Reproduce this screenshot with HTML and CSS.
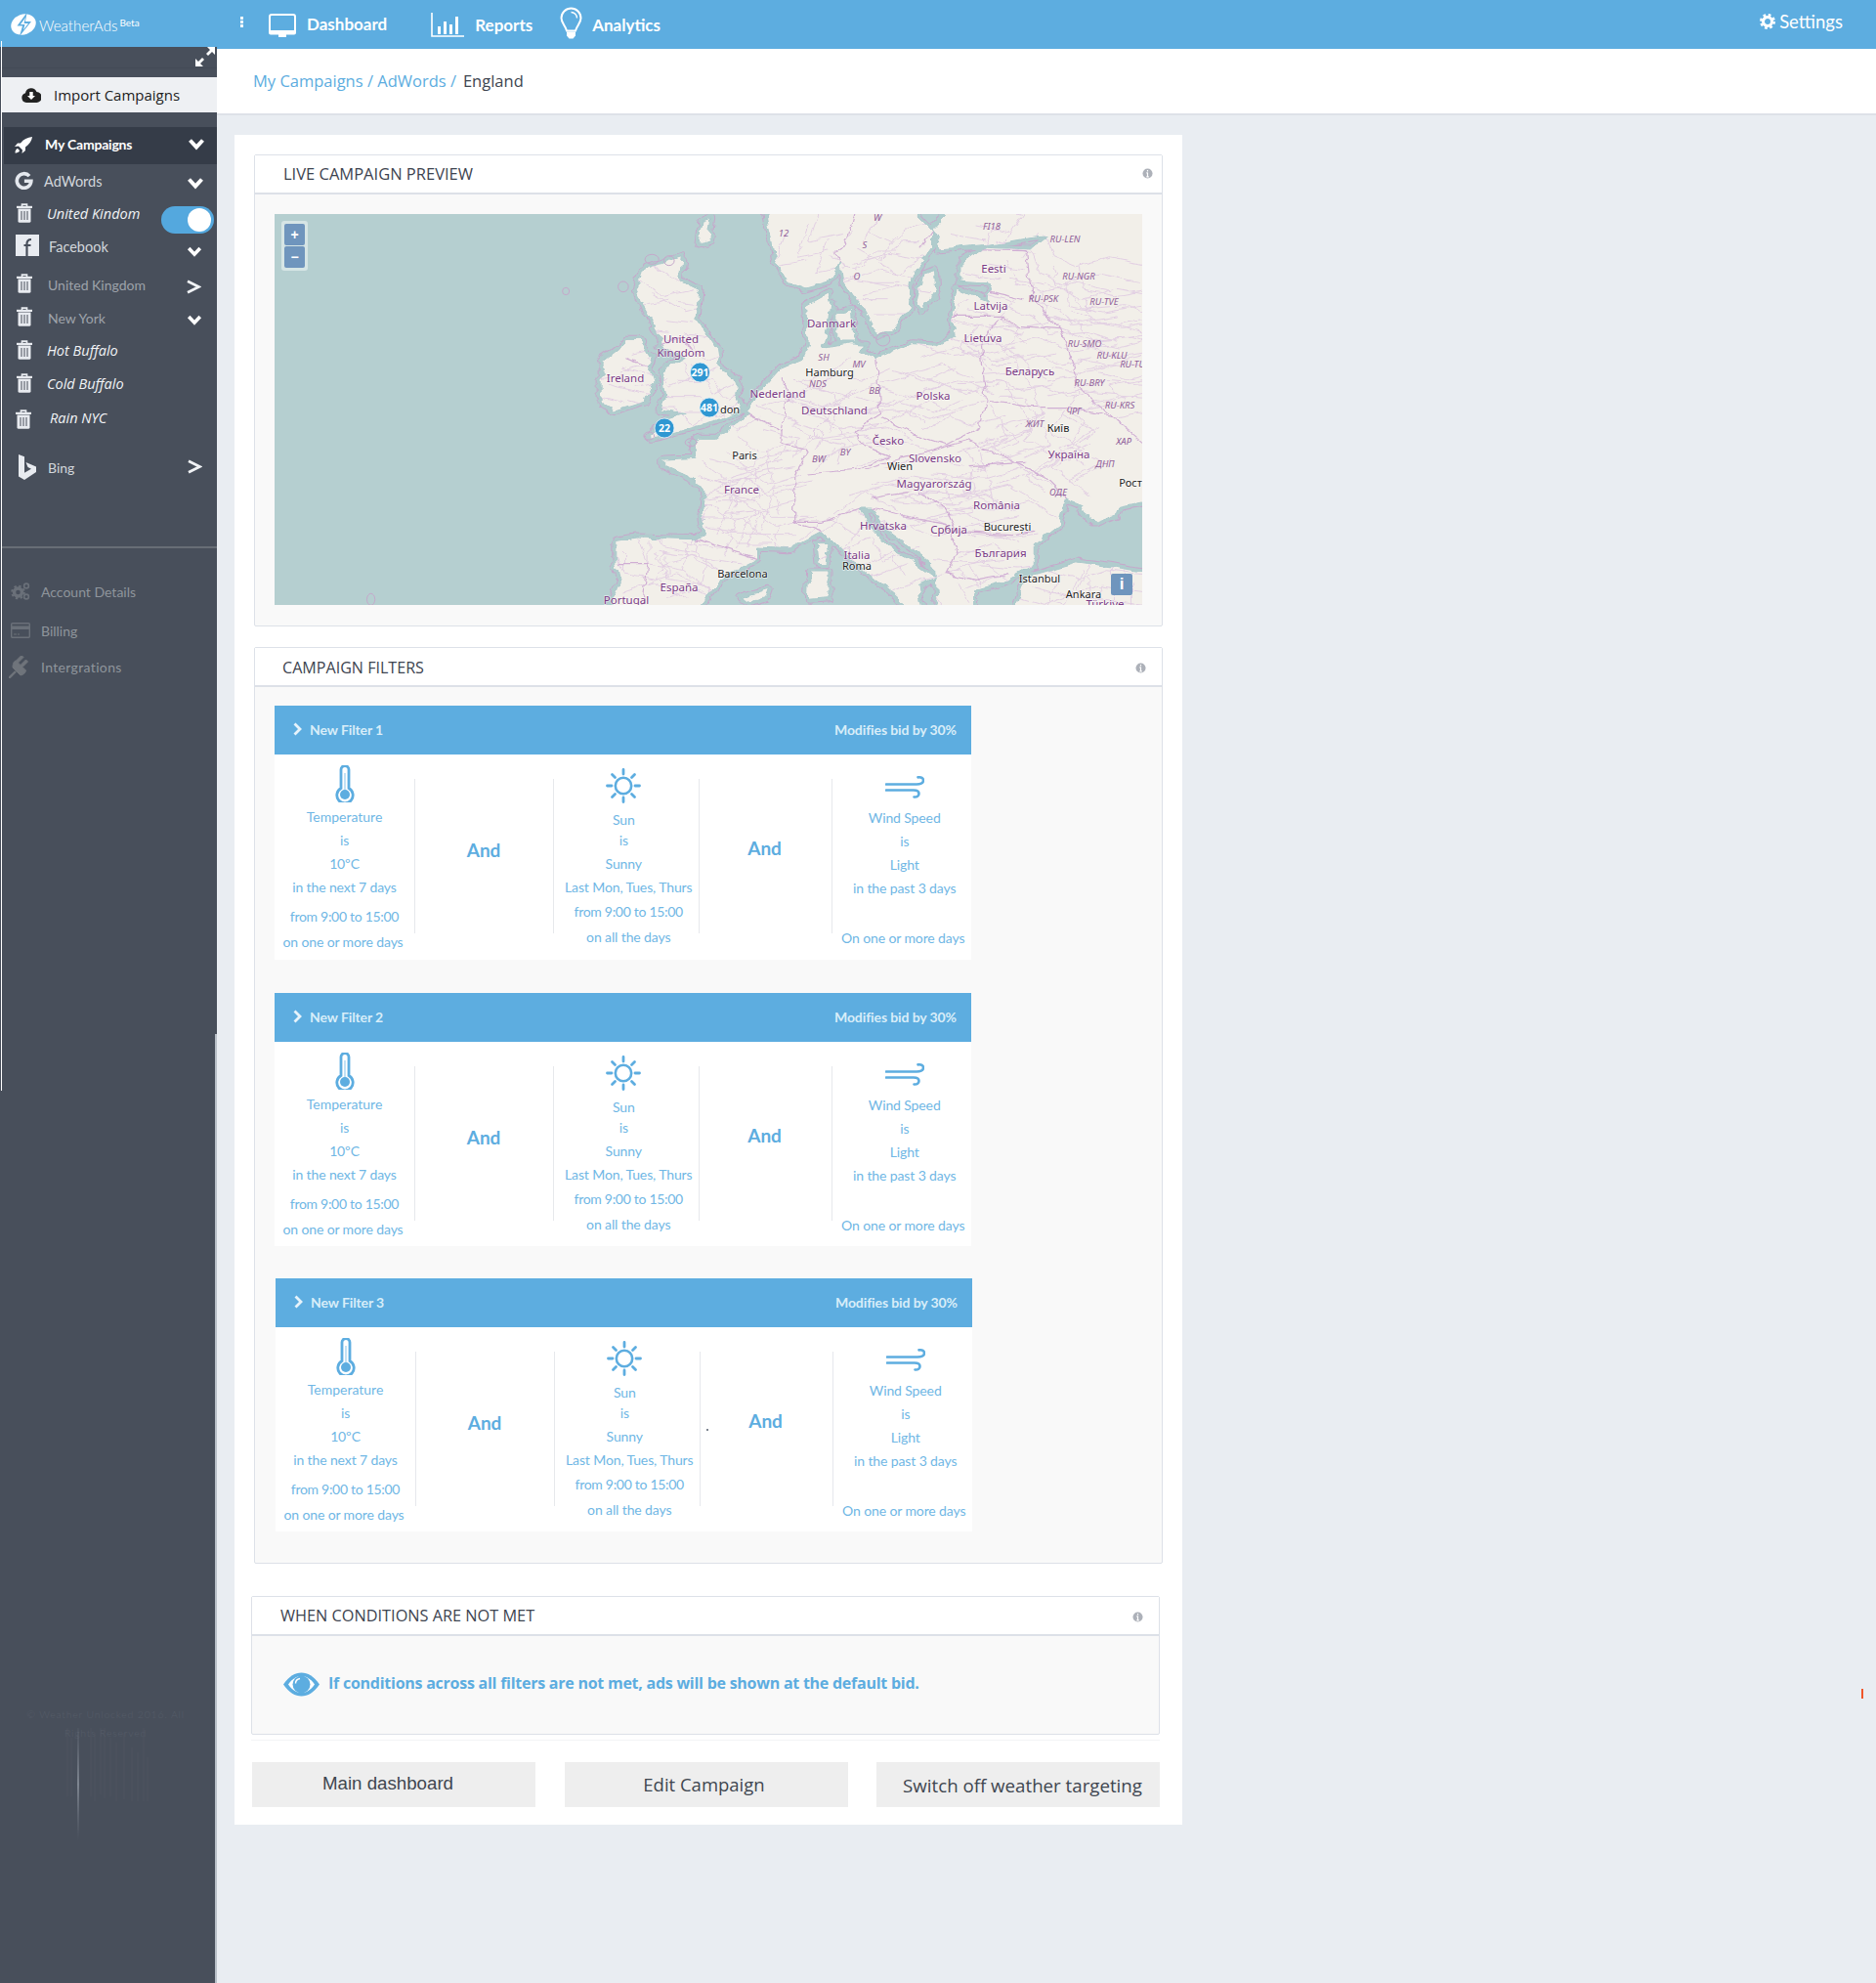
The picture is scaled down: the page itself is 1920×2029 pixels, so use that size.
FILE: index.html
```html
<!DOCTYPE html>
<html lang="en">
<head>
<meta charset="utf-8">
<title>WeatherAds</title>
<link rel="stylesheet" href="styles.css">
</head>
<body>
<svg class="defs" width="0" height="0" aria-hidden="true">
  <defs>
    <linearGradient id="streak" x1="0" y1="0" x2="0" y2="1"><stop offset="0" stop-color="#6a717d" stop-opacity=".15"/><stop offset=".5" stop-color="#7f8691"/><stop offset="1" stop-color="#6a717d" stop-opacity="0"/></linearGradient>
  </defs>
  <symbol id="trash" viewBox="0 0 16 20"><path d="M5.500 3.500V1.200h5v2.300" fill="none" stroke="currentColor" stroke-width="1.700"/><rect y="2.800" width="16" height="2.200" fill="currentColor"/><path d="M1.500 5.500h13v12.700a1.600 1.600 0 0 1-1.600 1.600H3.100a1.600 1.600 0 0 1-1.600-1.600z" fill="currentColor"/><path d="M5 8v9M8 8v9M11 8v9" stroke="#484f5b" stroke-width="1"/></symbol>
  <symbol id="chev" viewBox="0 0 18 13"><path d="M2.500 2.500 9 9.500l6.500-7" fill="none" stroke="currentColor" stroke-width="4"/></symbol>
  <symbol id="gt" viewBox="0 0 15 15"><path d="M1 1.800 12.500 7.500 1 13.200" fill="none" stroke="currentColor" stroke-width="2.800"/></symbol>
  <symbol id="therm" viewBox="0 0 20 38"><path d="M6 4.500a4 4 0 0 1 8 0v19a8.200 8.200 0 1 1-8 0z" fill="none" stroke="currentColor" stroke-width="2.800"/><path d="M10 8v18" stroke="#a9d4ef" stroke-width="1.400"/><circle cx="10" cy="30" r="5" fill="currentColor"/></symbol>
  <symbol id="sun" viewBox="0 0 36 36"><circle cx="18" cy="18" r="8.200" fill="none" stroke="currentColor" stroke-width="2.600"/><path d="M18 1.500v4.500M18 30v4.500M1.500 18H6M30 18h4.500M6.500 6.500l3 3M26.500 26.500l3 3M29.500 6.500l-3 3M9.500 26.500l-3 3" stroke="currentColor" stroke-width="2.800" stroke-linecap="round"/></symbol>
  <symbol id="wind" viewBox="0 0 40 23"><path d="M1 8.500h31c5 0 7-1.800 7-4S37 .9 33.500 1.400M1 14.500h28c4 0 5.500 1.200 5.500 3.500s-2 3.800-5 3.500" fill="none" stroke="currentColor" stroke-width="2.600" stroke-linecap="round"/></symbol>
  <symbol id="info" viewBox="0 0 12 12"><circle cx="6" cy="6" r="5.500" fill="currentColor"/><path d="M6 2.300v1.400M6 5v4.700M4.700 5.300H6M4.700 9.600h2.700" stroke="#fff" stroke-width="1.300"/></symbol>
  <symbol id="chevr" viewBox="0 0 9 14"><path d="M1.500 1.500 7 7l-5.500 5.500" fill="none" stroke="currentColor" stroke-width="2.800"/></symbol>
</svg>

<header class="topbar">
  <svg class="logo" viewBox="0 0 28 24"><ellipse cx="14" cy="12" rx="13" ry="10.500" fill="#fff" transform="rotate(-20 14 12)"/><path d="M17.500 0 7.500 13.500h5.500L10 24 22 9h-6z" fill="#5dade0"/><path d="M16 5 11 12h4.500L14 17.500 19 11h-4.500z" fill="#fff"/></svg>
  <span class="brand">WeatherAds<sup>Beta</sup></span>
  <span class="kebab"><i></i><i></i><i></i></span>
  <a class="nav nav-dash"><svg class="nav-ic ic-mon" viewBox="0 0 28 24"><rect x="1" y="1" width="26" height="17.500" rx="2" fill="none" stroke="#fff" stroke-width="2"/><path d="M0 17h28v2.500a2 2 0 0 1-2 2H2a2 2 0 0 1-2-2zM10 21h8v3h-8z" fill="#fff"/></svg><span>Dashboard</span></a>
  <a class="nav nav-rep"><svg class="nav-ic ic-bars" viewBox="0 0 34 25"><path d="M1 0v24h33" fill="none" stroke="#fff" stroke-width="1.600"/><path d="M7 14h3v8H7zM13 9h3v13h-3zM19 12h3v10h-3zM25 4h3v18h-3z" fill="#fff"/></svg><span>Reports</span></a>
  <a class="nav nav-ana"><svg class="nav-ic ic-bulb" viewBox="0 0 23 33"><path d="M11.500 1.500a10 10 0 0 0-10 10c0 5 4 7.500 5.500 13h9c1.500-5.500 5.500-8 5.500-13a10 10 0 0 0-10-10z" fill="none" stroke="#fff" stroke-width="2"/><path d="M11.500 5.500a6 6 0 0 1 6 6" fill="none" stroke="#fff" stroke-width="1.400"/><path d="M7 25.500h9v4l-2.500 3h-4L7 29.500z" fill="#fff"/></svg><span>Analytics</span></a>
  <a class="settings"><svg class="cog" viewBox="0 0 16 16"><circle cx="8" cy="8" r="4.500" fill="none" stroke="#fff" stroke-width="3"/><circle cx="8" cy="8" r="6.500" fill="none" stroke="#fff" stroke-width="3" stroke-dasharray="2.600 2.500"/></svg>Settings</a>
</header>

<div class="shell">
  <aside class="sidebar">
    <div class="side-upper">
      <div class="expand"><svg class="expand-ic" viewBox="0 0 20 20"><path d="M12 0h8v8l-3-3-4 4-2-2 4-4zM0 12l3 3 4-4 2 2-4 4 3 3H0z" fill="#fff"/></svg></div>
      <div class="import"><svg class="import-ic" viewBox="0 0 20 16"><path d="M5 16a5 5 0 0 1-1-9.800A6 6 0 0 1 15.500 5 5.500 5.500 0 0 1 15 16z" fill="#222"/><path d="M8.300 5h3.400v4H14l-4 4-4-4h2.300z" fill="#fff"/></svg>Import Campaigns</div>
      <div class="mine"><svg class="rocket" viewBox="0 0 18 17"><path d="M18 0C13 .5 9 2.500 6 6.500H3L0 10l4-.5L8 13.500l-.5 3.500 3.500-3V10.500C15 7.500 17.500 4.500 18 0zM2.500 12c1 0 2.500 1.500 2.500 2.500C4 16 2 16.500 .5 16.500.5 15 1 13 2.500 12z" fill="#fff"/></svg><span class="t-mine">My Campaigns</span><svg class="chev chev-mine"><use href="#chev"/></svg></div>

      <div class="row r-ad"><svg class="r-g" viewBox="0 0 24 24"><path d="M19 6.500A9.200 9.200 0 1 0 21.300 13H12.500" fill="none" stroke="#e4e8ee" stroke-width="4.600"/></svg><span class="t-ad">AdWords</span><svg class="chev chev-ad"><use href="#chev"/></svg></div>
      <div class="row"><svg class="tr"><use href="#trash"/></svg><em class="t-it">United Kindom</em><span class="toggle"><i></i></span></div>
      <div class="row r-fb"><svg class="r-f" viewBox="0 0 24 22"><rect width="24" height="22" fill="#e8ebf0"/><path d="M11.500 22V9.500c0-3 1.500-4.500 4.500-4.500M8.500 11h7" fill="none" stroke="#484f5b" stroke-width="2.200"/></svg><span class="t-fb">Facebook</span><svg class="chev chev-fb"><use href="#chev"/></svg></div>
      <div class="row r-uk"><svg class="tr tr-b"><use href="#trash"/></svg><span class="t-dim">United Kingdom</span><svg class="gt gt-a"><use href="#gt"/></svg></div>
      <div class="row"><svg class="tr tr-b"><use href="#trash"/></svg><span class="t-dim">New York</span><svg class="chev chev-ny"><use href="#chev"/></svg></div>
      <div class="row"><svg class="tr tr-b"><use href="#trash"/></svg><em class="t-it">Hot Buffalo</em></div>
      <div class="row"><svg class="tr tr-b"><use href="#trash"/></svg><em class="t-it">Cold Buffalo</em></div>
      <div class="row r-rain"><svg class="tr tr-rain"><use href="#trash"/></svg><em class="t-it t-rain">Rain NYC</em></div>
      <div class="row r-bing"><svg class="r-b" viewBox="0 0 18 26"><path d="M0 0l6 2.200v16.500l7-4-3.500-1.700L7.500 8l10.500 4.500v5.500L6 26l-6-3.500z" fill="#e8ebf0"/></svg><span class="t-bing">Bing</span><svg class="gt gt-b"><use href="#gt"/></svg></div>

      <hr class="side-rule">
      <div class="sub sub-acc"><svg class="s-ic" viewBox="0 0 20 18"><circle cx="7.500" cy="10" r="4" fill="none" stroke="#6a7079" stroke-width="3.400"/><circle cx="7.500" cy="10" r="6.300" fill="none" stroke="#6a7079" stroke-width="2" stroke-dasharray="2.400 2.550"/><circle cx="16" cy="3.500" r="2.400" fill="none" stroke="#6a7079" stroke-width="1.600"/><circle cx="16" cy="14.500" r="2.400" fill="none" stroke="#6a7079" stroke-width="1.600"/></svg>Account Details</div>
      <div class="sub sub-bill"><svg class="s-ic" viewBox="0 0 20 16"><rect x=".7" y=".7" width="18.600" height="14.600" rx="1" fill="none" stroke="#6a7079" stroke-width="1.400"/><rect y="3.500" width="20" height="3.500" fill="#6a7079"/><path d="M3 12h3M7 12h2" stroke="#6a7079"/></svg>Billing</div>
      <div class="sub sub-int"><svg class="s-plug" viewBox="0 0 22 23"><path d="M0 23l7-7" fill="none" stroke="#6f747b" stroke-width="2.400"/><path d="M4 12l8 8c3-.500 5-2.500 5.500-5l-3.500-3.500 5.500-5.500-2-2-5.500 5.500-2.500-2.500 5.500-5.500-2-2-5.500 5.500L6 5.500C4.500 7 4 9.500 4 12z" fill="#6f747b" stroke="#6f747b" stroke-width="1"/></svg>Intergrations</div>
    </div>
    <div class="side-lower">
      <div class="legal">
        <p class="legal-a">© Weather Unlocked 2016. All</p>
        <p class="legal-b">Rights Reserved</p>
        <svg class="streaks" viewBox="0 0 90 120"><path class="st1" d="M2 0v70M6 10v60M26 0v70M30 5v70M36 0v68M40 0v72M46 10v60M52 15v60M60 5v68M68 20v55M74 25v50M80 0v75M84 30v45"/><rect class="st2" x="12" y="0" width="2" height="115"/></svg>
      </div>
    </div>
  </aside>

  <div class="main">
    <nav class="crumbs"><a>My Campaigns / AdWords /</a><span>England</span></nav>
    <div class="card">

      <section class="panel">
        <div class="p-head"><h2>LIVE CAMPAIGN PREVIEW</h2><svg class="info i-1"><use href="#info"/></svg></div>
        <div class="p-body p-map">
          <div class="map">
            <svg class="map-base" viewBox="19 27 1513 1200" preserveAspectRatio="none">
              <defs>
                <path id="land" d="M872,0 885,100 890,160 915,235 945,255 985,235 1000,190 1005,170 1010,235 1030,290 1045,320 1070,400 1095,385 1125,320 1130,215 1165,130 1165,80 1125,0z M1205,0 1165,75 1180,135 1290,115 1340,100 1368,95 1340,135 1260,130 1215,170 1215,235 1265,240 1265,295 1235,275 1210,255 1200,340 1205,400 1175,430 1130,425 1070,470 1040,445 1050,430 1020,425 975,440 985,370 990,300 985,270 945,310 950,430 940,470 900,500 880,540 860,580 845,630 835,655 790,715 760,715 745,740 755,775 700,780 700,800 750,840 770,880 765,960 770,1005 755,1025 650,1020 615,1030 615,1100 620,1140 600,1250 755,1250 780,1180 810,1130 860,1085 860,1050 915,1055 975,1000 1010,1060 1060,1140 1105,1200 1130,1250 1150,1250 1140,1170 1175,1145 1130,1090 1090,1050 1050,970 1040,930 1060,930 1080,985 1130,1050 1170,1110 1175,1250 1240,1250 1240,1180 1300,1150 1345,1105 1345,1040 1385,985 1400,900 1430,920 1425,940 1450,975 1490,950 1495,925 1560,900 1560,0z M1310,1250 1330,1140 1420,1095 1480,1110 1560,1130 1560,1250z M665,195 730,155 725,230 760,260 755,350 790,440 795,500 830,545 825,590 835,625 790,660 730,690 690,710 672,715 700,660 735,640 690,630 700,590 695,530 700,500 720,480 735,470 690,430 690,400 665,320 650,260 660,200z M655,415 675,470 670,490 680,540 665,600 610,630 590,610 590,550 590,480 620,440 630,415z M1150,210 1170,200 1172,260 1150,320 1140,300z M965,1040 985,1040 980,1100 968,1100z M952,1125 985,1125 985,1205 950,1210z M830,1205 860,1190 880,1180 875,1205 850,1220z M765,50 780,40 775,110 760,120z M1000,330 1025,320 1030,420 1000,420z"/>
                <clipPath id="landclip"><use href="#land"/></clipPath>
                <filter id="rough" filterUnits="userSpaceOnUse" x="0" y="0" width="1600" height="1300" color-interpolation-filters="sRGB">
                  <feTurbulence type="fractalNoise" baseFrequency=".03" numOctaves="3" seed="7" result="n"/>
                  <feDisplacementMap in="SourceGraphic" in2="n" scale="20" xChannelSelector="R" yChannelSelector="G"/>
                </filter>
                <g id="regs">
                  <path d="M1340 140l15 70 40 30 60-30 70 25M1400 240l5 70 60 20 67-20M1340 290l50 30 20 50 70-10 52 30M1390 380l60 40 82-20M1420 470l50 20 62-30M1410 560l50-20 72 10M1480 650l-30-40 82-30"/>
                  <path d="M1200 340l-20 60 60 30 45-10 25 60M1290 340l-30 50 30 40 60-20M1255 520l70-10 45 30 50-20M1320 620l-30-80-40 0M1260 600l-60 30-40-30-40 40M1120 520l60-30 60 40M1075 560l60 30 50-40"/>
                  <path d="M1400 620l-30 70 60 60-50 50M1320 620l20 70-50 40M1440 730l-70 70 40 50M1340 690l-90 40M1260 720l40 60-60 30"/>
                  <path d="M960 560l60 30 50-40M905 590l60 40 30 60 80-20M915 660l60 30-10 60M965 700l-40 70M1000 755l50-30M1030 690l60-10 40 40M1000 520l-30 40-55 30"/>
                  <path d="M805 760l40 50 60-30M755 830l60 30 40-40 70-20M770 900l50-10 40 50 65-30M765 960l70 0 30 50 60 0M855 810l10 90M820 890l-30 120M865 940l-20 110"/>
                  <path d="M650 1020l20 80 60 20 50 60M730 1120l10-85M670 1100l0-70M780 1180l-60-50-50 30M730 1035l70 20"/>
                  <path d="M1090 940l50 30 60-30 80-30M1230 800l10 90 60-30 50 50M1200 930l80 60M1140 880l100 10M1060 860l70-30 70 20M975 1000l50-70 60 60M1010 1060l50-40 20 70M1060 1140l60-40"/>
                  <path d="M1210 1060l70 10 50-10M1190 1130l60-40 40 50M1210 1160l20 60M1340 1170l60 30 50-30 82 20M1430 1120l-30 110M1480 1110l0 120"/>
                  <path d="M1035 130l40 40 40-60 30 0M1070 50l-30 70M950 60l-20 100 60-20M1010 230l60-30 60 20M1030 290l60 0M1240 60l60 20M1290 115l30-80M1265 180l60 20M1230 320l60 30M640 220l60 60 50-20M700 350l50 10M710 440l40 90 40-30M700 590l60 0 30 60 40-50M620 510l50-20M600 550l70 30"/>
                </g>
              </defs>
              <g filter="url(#rough)">
                <use href="#land" class="l-halo"/>
                <use href="#land" class="l-shal"/>
                <use href="#land" class="l-land"/>
                <g clip-path="url(#landclip)">
                  <use href="#regs" class="reg"/>
                  <use href="#regs" class="reg" x="34" y="46"/>
                  <use href="#regs" class="reg" x="-42" y="28"/>
                  <use href="#regs" class="reg" x="22" y="-52"/>
                  <g class="nat">
                    <path d="M840 640l65 50 0 40 45 25-25 75 0 70 0 70 50 30"/>
                    <path d="M1070 470l5 170-45 50 20 50 40 30-50 40-90 15"/>
                    <path d="M1075 650l55 50 60 35 60-55 10-80"/>
                    <path d="M1250 430l5 90 5 80"/>
                    <path d="M905 690l10-90-10-70"/>
                    <path d="M755 1025l105 60"/>
                    <path d="M1200 340l90 0 20 30 80 10"/>
                    <path d="M1205 240l125 50"/>
                    <path d="M1260 600l80 20 60 0 80 30 52 80"/>
                    <path d="M1230 720l80 70 50 40 40 70"/>
                    <path d="M1230 800l100-10"/>
                    <path d="M1140 880l50 50 20 70 90 10 45-10"/>
                    <path d="M1050 810l80-40 100-50"/>
                    <path d="M1130 880l-70 20"/>
                    <path d="M1060 930l70 30 60 20 20 80-20 70 50 20 60-20"/>
                    <path d="M1330 140l10 150 50 90 20 100 10 80 60 90"/>
                    <path d="M620 1100l50 0-10 135"/>
                    <path d="M1005 170l-5-20 20-60 10-70"/>
                    <path d="M925 970l50 0 65-40"/>
                    <path d="M1290 340l-30 60-10 30"/>
                    <path d="M1165 80l-20 50M1180 135l150 5"/>
                    <path d="M690 430l35-20 25 30"/>
                    <path d="M635 470l35 25"/>
                  </g>
                </g>
              </g>
              <ellipse cx="527" cy="264" rx="6" ry="11" class="isle"/>
              <ellipse cx="187" cy="1210" rx="7" ry="18" class="isle"/>
              <ellipse cx="677" cy="166" rx="12" ry="15" class="isle"/>
              <ellipse cx="707" cy="170" rx="9" ry="15" class="isle"/>
              <ellipse cx="627" cy="250" rx="9" ry="16" class="isle"/>
              <ellipse cx="672" cy="708" rx="9" ry="12" class="isle"/>
              <ellipse cx="745" cy="728" rx="10" ry="12" class="isle"/>
              <ellipse cx="1080" cy="412" rx="12" ry="20" class="isle"/>
            </svg>
            <svg class="map-labels" viewBox="0 0 888 400">
              <g class="pl">
                <text x="416" y="132">United</text><text x="416" y="146">Kingdom</text><text x="359" y="172">Ireland</text><text x="570" y="116">Danmark</text><text x="515" y="188">Nederland</text><text x="573" y="205">Deutschland</text><text x="674" y="190">Polska</text><text x="736" y="60">Eesti</text><text x="733" y="98">Latvija</text><text x="725" y="131">Lietuva</text><text x="773" y="165">Беларусь</text><text x="813" y="250">Україна</text><text x="628" y="236">Česko</text><text x="676" y="254">Slovensko</text><text x="478" y="286">France</text><text x="675" y="280">Magyarország</text><text x="739" y="302">România</text><text x="623" y="323">Hrvatska</text><text x="690" y="327">Србија</text><text x="743" y="351">България</text><text x="596" y="353">Italia</text><text x="414" y="386">España</text><text x="360" y="399">Portugal</text><text x="850" y="403">Türkiye</text>
              </g>
              <g class="pk">
                <text x="568" y="166">Hamburg</text><text x="802" y="223">Київ</text><text x="876" y="279">Рост</text><text x="640" y="262">Wien</text><text x="481" y="251">Paris</text><text x="750" y="324">București</text><text x="596" y="364">Roma</text><text x="479" y="372">Barcelona</text><text x="783" y="377">Istanbul</text><text x="828" y="393">Ankara</text><text x="466" y="204">don</text>
              </g>
              <g class="pi">
                <text x="562" y="150">SH</text><text x="598" y="157">MV</text><text x="556" y="177">NDS</text><text x="614" y="184">BB</text><text x="734" y="16">FI18</text><text x="809" y="29">RU-LEN</text><text x="823" y="67">RU-NGR</text><text x="787" y="90">RU-PSK</text><text x="849" y="93">RU-TVE</text><text x="829" y="136">RU-SMO</text><text x="857" y="148">RU-KLU</text><text x="878" y="157">RU-TU</text><text x="834" y="176">RU-BRY</text><text x="865" y="199">RU-KRS</text><text x="818" y="205">ЧРГ</text><text x="778" y="218">ЖИТ</text><text x="869" y="236">ХАР</text><text x="850" y="259">ДНП</text><text x="802" y="288">ОДЕ</text><text x="584" y="247">BY</text><text x="557" y="254">BW</text><text x="521" y="23">12</text><text x="617" y="7">W</text><text x="604" y="35">S</text><text x="596" y="67">O</text>
              </g>
              <g class="mk">
                <circle cx="435.500" cy="162" r="10"/><text x="435.500" y="166">291</text>
                <circle cx="445" cy="198" r="10"/><text x="445" y="202">481</text>
                <circle cx="399" cy="219" r="10"/><text x="399" y="223">22</text>
              </g>
            </svg>
            <div class="zoomctl"><button class="zb">+</button><button class="zb">−</button></div>
            <button class="zb map-i">i</button>
          </div>
        </div>
      </section>

      <section class="panel panel-filters">
        <div class="p-head"><h2>CAMPAIGN FILTERS</h2><svg class="info i-2"><use href="#info"/></svg></div>
        <div class="p-body p-filters">

          <article class="filter">
            <div class="f-head"><svg class="f-chev"><use href="#chevr"/></svg><b>New Filter 1</b><b class="f-mod">Modifies bid by 30%</b></div>
            <div class="f-body">
              <div class="col c-temp"><svg class="w-therm"><use href="#therm"/></svg><p class="wide">Temperature</p><p>is</p><p>10ºC</p><p>in the next 7 days</p><p class="m-6 tight">from 9:00 to 15:00</p><p class="m-2 s-l">on one or more days</p></div>
              <div class="col c-and1 rule"><strong>And</strong></div>
              <div class="col c-sun rule"><svg class="w-sun"><use href="#sun"/></svg><p class="s-sun">Sun</p><p class="s-sun m-n3">is</p><p class="s-sun">Sunny</p><p class="s-r">Last Mon, Tues, Thurs</p><p class="s-r m-1 tight">from 9:00 to 15:00</p><p class="s-r m-2">on all the days</p></div>
              <div class="col c-and2 rule"><strong>And</strong></div>
              <div class="col c-wind rule"><svg class="w-wind"><use href="#wind"/></svg><p>Wind Speed</p><p>is</p><p>Light</p><p>in the past 3 days</p><p class="m-27 s-l">On one or more days</p></div>
            </div>
          </article>

          <article class="filter f-2">
            <div class="f-head"><svg class="f-chev"><use href="#chevr"/></svg><b>New Filter 2</b><b class="f-mod">Modifies bid by 30%</b></div>
            <div class="f-body">
              <div class="col c-temp"><svg class="w-therm"><use href="#therm"/></svg><p class="wide">Temperature</p><p>is</p><p>10ºC</p><p>in the next 7 days</p><p class="m-6 tight">from 9:00 to 15:00</p><p class="m-2 s-l">on one or more days</p></div>
              <div class="col c-and1 rule"><strong>And</strong></div>
              <div class="col c-sun rule"><svg class="w-sun"><use href="#sun"/></svg><p class="s-sun">Sun</p><p class="s-sun m-n3">is</p><p class="s-sun">Sunny</p><p class="s-r">Last Mon, Tues, Thurs</p><p class="s-r m-1 tight">from 9:00 to 15:00</p><p class="s-r m-2">on all the days</p></div>
              <div class="col c-and2 rule"><strong>And</strong></div>
              <div class="col c-wind rule"><svg class="w-wind"><use href="#wind"/></svg><p>Wind Speed</p><p>is</p><p>Light</p><p>in the past 3 days</p><p class="m-27 s-l">On one or more days</p></div>
            </div>
          </article>

          <article class="filter f-3">
            <div class="f-head"><svg class="f-chev"><use href="#chevr"/></svg><b>New Filter 3</b><b class="f-mod">Modifies bid by 30%</b></div>
            <div class="f-body">
              <div class="col c-temp"><svg class="w-therm"><use href="#therm"/></svg><p class="wide">Temperature</p><p>is</p><p>10ºC</p><p>in the next 7 days</p><p class="m-6 tight">from 9:00 to 15:00</p><p class="m-2 s-l">on one or more days</p></div>
              <div class="col c-and1 rule"><strong>And</strong></div>
              <div class="col c-sun rule"><svg class="w-sun"><use href="#sun"/></svg><p class="s-sun">Sun</p><p class="s-sun m-n3">is</p><p class="s-sun">Sunny</p><p class="s-r">Last Mon, Tues, Thurs</p><p class="s-r m-1 tight">from 9:00 to 15:00</p><p class="s-r m-2">on all the days</p></div>
              <div class="col c-and2 rule"><i class="speck"></i><strong>And</strong></div>
              <div class="col c-wind rule"><svg class="w-wind"><use href="#wind"/></svg><p>Wind Speed</p><p>is</p><p>Light</p><p>in the past 3 days</p><p class="m-27 s-l">On one or more days</p></div>
            </div>
          </article>

        </div>
      </section>

      <section class="panel panel-cond">
        <div class="p-head"><h2>WHEN CONDITIONS ARE NOT MET</h2><svg class="info i-3"><use href="#info"/></svg></div>
        <div class="p-body p-cond">
          <svg class="eye" viewBox="0 0 37 25"><path d="M0 12.500C6 4 12 .5 18.500 .5S31 4 37 12.500C31 21 25 24.500 18.500 24.500S6 21 0 12.500z" fill="#5dade0"/><path d="M5 12.500C9 7 13 4 18.500 4S28 7 32 12.500C28 18 24 21 18.500 21S9 18 5 12.500z" fill="#fff"/><circle cx="18.500" cy="12.500" r="9" fill="#5dade0"/><path d="M17 6.500c-3 .5-4.500 3-4.500 5" fill="none" stroke="#fff" stroke-width="1.400"/></svg>
          <p>If conditions across all filters are not met, ads will be shown at the default bid.</p>
        </div>
      </section>

      <div class="thin-rule"></div>

      <div class="actions">
        <button class="btn b-1">Main dashboard</button>
        <button class="btn b-2">Edit Campaign</button>
        <button class="btn b-3">Switch off weather targeting</button>
      </div>
    </div>
  </div>
</div>
<i class="tick"></i>
</body>
</html>
```
FILE: styles.css
```css
* { box-sizing: border-box; }
html, body { margin: 0; padding: 0; }
body { background: #e9edf2; font-family: "Lato", sans-serif; color: #444; height: 2029px; overflow: hidden; position: relative; }
p, h2 { margin: 0; }
.defs { position: absolute; }

/* top bar */
.topbar { height: 50px; background: #5dade0; display: flex; align-items: center; color: #fff; position: relative; }
.logo { width: 28px; height: 24px; margin: -1px 0 0 10px; flex: none; }
.brand { font: 300 15.200px "Lato", sans-serif; margin: 0 0 0 2px; width: 206px; color: #fff; position: relative; top: 1px; }
.brand sup { font-size: 10px; font-weight: 400; margin-left: 2px; vertical-align: 5px; line-height: 0; }
.kebab { width: 3px; display: flex; flex-direction: column; gap: 1px; margin: -5px 0 0 0; }
.kebab i { display: block; width: 3px; height: 3px; background: #fff; }
.nav { display: flex; align-items: center; font: 700 17px "Lato", sans-serif; color: #fff; }
.nav-ic { flex: none; }
.nav-dash { margin-left: 26px; }
.ic-mon { width: 28px; height: 24px; margin-right: 11px; margin-top: 2px; }
.nav-dash span { position: relative; top: -1px; }
.nav-rep { margin-left: 45px; }
.ic-bars { width: 34px; height: 25px; margin-right: 11px; margin-top: 0; }
.nav-ana { margin-left: 28px; }
.ic-bulb { width: 23px; height: 33px; margin-right: 10px; margin-top: -3px; }
.settings { margin-left: auto; margin-right: 34px; display: flex; align-items: center; font: 400 18.500px "Lato", sans-serif; color: #fff; margin-top: -7px; }
.cog { width: 16px; height: 16px; margin-right: 4px; }

/* layout */
.shell { display: flex; align-items: flex-start; }
.sidebar { width: 222px; flex: none; margin-top: -2px; position: relative; z-index: 2; height: 1981px; }
.sidebar::before { content: ""; position: absolute; left: 1px; top: -6px; width: 1px; height: 1074px; background: #fff; z-index: 3; }
.side-upper { height: 1010px; background: #484f5b; }
.side-lower { height: 971px; width: 222px; background: #484f5b; border-right: 2px solid #b9c0c8; }

.expand { height: 22px; display: flex; justify-content: flex-end; border-bottom: 1px solid #434a56; }
.expand-ic { width: 20px; height: 20px; margin-right: 2px; }
.import { height: 36px; margin: 9px 0 0 2px; background: #eef0f3; display: flex; align-items: center; font: 400 15px "Open Sans", sans-serif; color: #222; }
.import-ic { width: 20px; height: 16px; margin: 0 13px 0 20px; }
.mine { height: 38px; margin: 15px 0 0 4px; background: #353c48; display: flex; align-items: center; color: #fff; font: 700 14px "Lato", sans-serif; letter-spacing: -.2px; }
.rocket { width: 18px; height: 17px; margin: -2px 13px 0 11px; }
.t-mine { margin-top: -4px; }
.chev { width: 18px; height: 13px; color: #fff; flex: none; }
.chev-mine { margin: -3px 12px 0 auto; }

.row { height: 34px; display: flex; align-items: center; position: relative; padding-left: 17px; color: #e0e3e8; font-size: 14.500px; }
.tr { width: 16px; height: 20px; color: #e8ebf0; flex: none; margin: -4px 0 0 0; }
.tr-b { margin-top: -4px; }
.tr-rain { margin-top: -1px; }
.t-it { font: italic 400 14.500px "Open Sans", sans-serif; color: #f1f3f6; margin: -3px 0 0 15px; }
.t-rain { margin-left: 19px; }
.t-dim { color: #9ea3aa; margin: -2px 0 0 16px; font-size: 14px; }
.r-ad { margin-top: 1px; padding-left: 15px; }
.r-g { width: 19px; height: 19px; margin-top: -4px; }
.t-ad { margin: -2px 0 0 11px; color: #d3d7dc; }
.chev-ad { margin: 2px 13px 0 auto; }
.toggle { margin: 9px 3px 0 auto; width: 54px; height: 28px; border-radius: 14px; background: #54a8de; position: relative; display: block; }
.toggle i { position: absolute; right: 3px; top: 2px; width: 24px; height: 24px; border-radius: 50%; background: #fff; }
.r-fb { padding-left: 16px; margin-top: -1px; }
.r-f { width: 24px; height: 22px; margin-top: -4px; }
.t-fb { margin: -1px 0 0 10px; color: #d3d7dc; }
.chev-fb { margin: 8px 15px 0 auto; width: 16px; }
.r-uk { margin-top: 5px; }
.gt { width: 15px; height: 15px; color: #f0f2f5; flex: none; }
.gt-a { margin: 2px 16px 0 auto; }
.chev-ny { margin: 2px 15px 0 auto; width: 16px; }
.r-rain { margin-top: 1px; padding-left: 16px; }
.r-bing { margin-top: 16px; padding-left: 19px; }
.r-b { width: 18px; height: 26px; margin-top: -2px; }
.t-bing { margin: -1px 0 0 12px; color: #d3d7dc; font-size: 14px; }
.gt-b { margin: -3px 15px 0 auto; }
.side-rule { border: 0; height: 2px; background: #686e76; margin: 63px 0 0 2px; }
.sub { display: flex; align-items: center; color: #8f959c; font-size: 14px; height: 34px; padding-left: 11px; }
.s-ic { width: 20px; height: 18px; margin-right: 11px; flex: none; }
.sub-acc { margin-top: 27px; }
.sub-bill { margin-top: 6px; }
.sub-bill .s-ic { height: 16px; }
.sub-int { margin-top: 3px; padding-left: 9px; letter-spacing: .35px; }
.s-plug { width: 22px; height: 23px; margin-right: 11px; flex: none; }

.legal { padding-top: 687px; text-align: center; width: 216px; position: relative; color: #565d69; font-size: 10.500px; letter-spacing: .8px; font-weight: 300; }
.legal-a { height: 19px; line-height: 19px; white-space: nowrap; }
.legal-b { height: 19px; line-height: 19px; }
.streaks { position: absolute; left: 67px; top: 710px; width: 90px; height: 120px; }
.st1 { stroke: #535a66; stroke-width: 1; fill: none; opacity: .5; }
.st2 { fill: url(#streak); }

/* main */
.main { width: 1698px; display: flex; flex-direction: column; }
.crumbs { height: 68px; background: #fff; border-bottom: 2px solid #dde1e8; display: flex; align-items: center; padding: 0 0 2px 37px; font: 400 16.500px "Open Sans", sans-serif; }
.crumbs a { color: #5dade0; }
.crumbs span { margin-left: 7px; color: #3e4550; }
.card { width: 970px; height: 1729px; margin: 20px 0 0 18px; background: #fff; padding: 20px 20px 18px; display: flex; flex-direction: column; }

.panel { border: 1px solid #dde1e8; border-radius: 2px; background: #f9f9f9; width: 930px; }
.p-head { height: 40px; background: #fff; border-bottom: 2px solid #dde1e8; display: flex; align-items: center; justify-content: space-between; padding-left: 29px; }
.p-head h2 { font: 400 16.500px "Open Sans", sans-serif; color: #3d4450; margin-top: -1px; }
.panel-filters h2 { margin: 2px 0 0 -1px; font-size: 16.100px; }
.panel-cond h2 { font-size: 16.300px; }
.info { width: 11px; height: 11px; color: #adb1b9; flex: none; }
.i-1 { margin-right: 9px; margin-top: -2px; }
.i-2 { margin-right: 16px; margin-top: 2px; }
.i-3 { margin-right: 16px; margin-top: 2px; }
.p-map { padding: 20px 20px 21px; }
.map { width: 888px; height: 400px; position: relative; overflow: hidden; background: #b5cfd0; }
.map-base, .map-labels { position: absolute; left: 0; top: 0; width: 888px; height: 400px; display: block; }
.map-base use, .map-base path, .map-base ellipse { vector-effect: non-scaling-stroke; stroke-linejoin: round; }
.l-halo { fill: #c6a8cb; stroke: #c6a8cb; stroke-width: 9px; }
.l-shal { fill: #b0cccd; stroke: #b0cccd; stroke-width: 7px; }
.l-land { fill: #f2efe9; stroke: #a9c9cb; stroke-width: 1px; }
.isle { fill: none; stroke: #c6a8cb; stroke-width: 1px; }
.reg { fill: none; stroke: #e2cfe3; stroke-width: 1px; }
.nat path { fill: none; stroke: #d0aed4; stroke-width: 1.200px; }
.map-labels text { text-anchor: middle; font-family: "Noto Sans", sans-serif; paint-order: stroke; stroke-linejoin: round; }
.pl text { font-size: 11.500px; fill: #7b3b86; stroke: rgba(255,255,255,.55); stroke-width: 1.500px; }
.pk text { font-size: 11px; fill: #222; stroke: rgba(255,255,255,.65); stroke-width: 1.500px; }
.pi text { font-size: 9.500px; font-style: italic; fill: #90609a; }
.mk circle { fill: #2f97d2; stroke: #e5f1f7; stroke-width: .8px; }
.mk text { font-size: 10.500px; font-weight: 700; fill: #fff; }
.zoomctl { position: absolute; left: 7px; top: 7px; width: 27px; height: 51px; background: rgba(255,255,255,.45); border-radius: 3px; padding: 3px 3px 0; display: flex; flex-direction: column; gap: 1px; }
.zb { display: block; border: 0; padding: 0; width: 21px; height: 22px; background: #6f95bd; color: #fff; font: 700 14px "Liberation Sans", sans-serif; border-radius: 2px; }
.map-i { position: absolute; left: 856px; top: 368px; width: 22px; font-size: 17px; }

.panel-filters { margin-top: 21px; }
.p-filters { padding: 19px 20px 33px; height: 896px; }
.filter { width: 713px; height: 260px; background: #fff; }
.f-2 { margin-top: 34px; height: 259px; }
.f-3 { margin: 33px 0 0 1px; height: 259px; }
.f-head { height: 50px; background: #5dade0; display: flex; align-items: center; padding: 0 15px 2px 19px; color: #d8edf9; font: 700 14px "Lato", sans-serif; letter-spacing: -.1px; }
.f-head b { font-weight: 700; }
.f-chev { width: 9px; height: 14px; color: #e6f3fb; margin-right: 8px; }
.f-mod { margin-left: auto; }
.f-body { display: grid; grid-template-columns: 143px 142px 148.500px 136px 143.500px; }
.col { position: relative; display: flex; flex-direction: column; align-items: center; height: 209px; color: #70b7e5; font-size: 14px; line-height: 24px; white-space: nowrap; letter-spacing: -.12px; }
.rule::before { content: ""; position: absolute; left: 0; top: 25px; width: 1px; height: 158px; background: #e6e8ec; }
.col p { height: 24px; }
.col .wide { letter-spacing: 0; }
.col .tight { letter-spacing: -.3px; }
.col strong { font: 700 19px/24px "Lato", sans-serif; color: #5dade0; }
.c-and1 { padding-top: 86px; }
.c-and2 { padding-top: 84px; }
.c-temp { padding-top: 11px; }
.w-therm { width: 20px; height: 38px; color: #5dade0; margin-bottom: 3px; flex: none; }
.c-sun { padding-top: 14px; }
.w-sun { width: 36px; height: 36px; color: #5dade0; margin: 0 4px 5px 0; flex: none; }
.s-sun { padding-right: 4px; }
.s-r { padding-left: 6px; }
.c-wind { padding-top: 22px; padding-left: 7px; }
.w-wind { width: 40px; height: 23px; color: #5dade0; margin-bottom: 8px; flex: none; }
.m-6 { margin-top: 6px; }
.m-2 { margin-top: 2px; }
.m-1 { margin-top: 1px; }
.m-n3 { margin-top: -3px; }
.m-27 { margin-top: 27px; }
.s-l { padding-right: 3px; }
.speck { position: absolute; left: 7px; top: 104px; width: 2px; height: 2px; background: #7d8590; }

.panel-cond { margin: 33px 0 0 -3px; height: 142px; }
.p-cond { height: 100px; display: flex; align-items: center; padding: 0 0 0 32px; }
.eye { width: 37px; height: 25px; flex: none; margin: -1px 9px 0 0; }
.p-cond p { font: 700 16px "Open Sans", sans-serif; color: #5dade0; letter-spacing: -.25px; margin-top: -5px; }
.thin-rule { height: 1px; width: 930px; margin: 5px 0 0 -3px; background: #f3f4f6; }
.actions { display: flex; margin: 22px 0 0 -2px; width: 930px; height: 46px; }
.btn { width: 290px; height: 46px; border: 0; background: #eeeeee; color: #3f4650; font: 400 18.700px "Open Sans", sans-serif; padding: 0; flex: none; }
.b-1 { padding: 0 12px 3px 0; font: 400 18.700px "Liberation Sans", sans-serif; }
.b-2 { margin-left: 30px; padding: 0 5px 2px 0; font-size: 18.500px; }
.b-3 { margin-left: 29px; padding-left: 9px; }
.tick { position: absolute; left: 1905px; top: 1728px; width: 2px; height: 10px; background: #f0562a; }
```
